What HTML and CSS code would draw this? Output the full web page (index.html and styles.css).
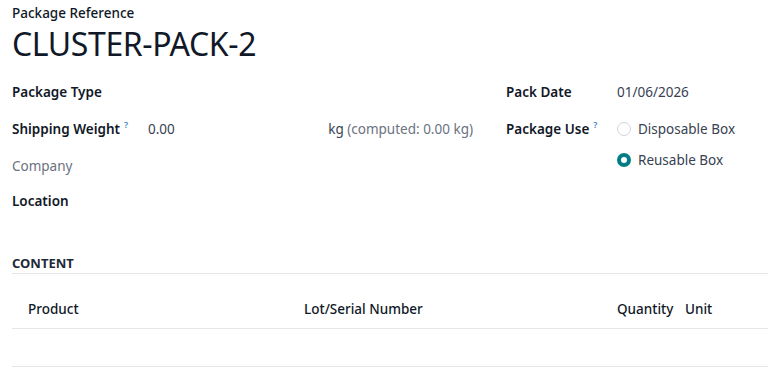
FILE: index.html
```html
<!DOCTYPE html>
<html>
<head>
<meta charset="utf-8">
<link rel="stylesheet" href="styles.css">
</head>
<body>
<div class="sheet">
  <div class="ref-label">Package Reference</div>
  <h1 class="title">CLUSTER-PACK-2</h1>

  <div class="groups">
    <div class="group left">
      <div class="row"><div class="label">Package Type</div><div class="value"></div></div>
      <div class="row"><div class="label">Shipping Weight<sup class="help">?</sup></div>
        <div class="value weight"><span>0.00</span><span class="unit">kg <span class="muted">(computed: 0.00 kg)</span></span></div></div>
      <div class="row"><div class="label muted-label">Company</div><div class="value"></div></div>
      <div class="row"><div class="label">Location</div><div class="value"></div></div>
    </div>
    <div class="group right">
      <div class="row"><div class="label">Pack Date</div><div class="value">01/06/2026</div></div>
      <div class="row top"><div class="label">Package Use<sup class="help">?</sup></div>
        <div class="value radios">
          <label class="radio"><span class="dot"></span>Disposable Box</label>
          <label class="radio"><span class="dot checked"></span>Reusable Box</label>
        </div></div>
    </div>
  </div>

  <div class="section">CONTENT</div>
  <table class="lines">
    <thead>
      <tr><th class="c-product">Product</th><th class="c-lot">Lot/Serial Number</th><th class="c-qty">Quantity</th><th class="c-unit">Unit</th></tr>
    </thead>
    <tbody>
      <tr><td></td><td></td><td></td><td></td></tr>
    </tbody>
  </table>
</div>
</body>
</html>
```
FILE: styles.css
```css
* { box-sizing: border-box; }
html, body { margin: 0; padding: 0; background: #fff; }
body {
  font-family: "Noto Sans", "Open Sans", sans-serif;
  font-size: 13.5px;
  color: #1f2937;
  width: 768px;
  overflow: hidden;
}
.sheet { padding: 4px 0 0 12px; }
.ref-label { font-size: 13.5px; font-weight: 500; line-height: 18px; color: #111827; }
.title {
  margin: 3px 0 0;
  font-size: 32px;
  font-weight: 400;
  line-height: 38px;
  color: #111827;
  letter-spacing: -0.4px;
}
.groups { display: flex; margin-top: 19px; }
.group.left { width: 494px; }
.group.right { flex: 1; }
.row { display: flex; align-items: flex-start; min-height: 37px; }
.left .row:nth-child(3) { min-height: 35px; }
.label { font-weight: 600; color: #111827; line-height: 20px; }
.left .label { width: 136px; }
.right .label { width: 111px; }
.muted-label { font-weight: 400; color: #6b7280; }
.value { line-height: 20px; color: #374151; }
.left .value { flex: 1; padding-right: 33px; }
.weight { display: flex; justify-content: space-between; }
.muted { color: #6b7280; }
.help { color: #3b82c4; font-size: 9px; font-weight: 600; margin-left: 4px; vertical-align: 0; position: relative; top: -6px; }
.radios { display: flex; flex-direction: column; gap: 11px; }
.radio { display: flex; align-items: center; gap: 7px; line-height: 20px; color: #374151; }
.dot { width: 14px; height: 14px; border-radius: 50%; border: 1px solid #d1d5db; background: #fff; }
.dot.checked { border: 4px solid #017e84; background: #fff; }
.section {
  margin-top: 25px;
  font-weight: 700;
  font-size: 13px;
  line-height: 20px;
  color: #1f2937;
  border-bottom: 1px solid #e5e7eb;
}
.lines { width: 756px; border-collapse: collapse; table-layout: fixed; margin-top: 13px; }
.lines th { text-align: left; font-weight: 500; color: #111827; height: 41px; padding: 3px 0 0 16px; border-bottom: 1px solid #e5e7eb; }
.lines td { height: 38px; border-bottom: 1px solid #e5e7eb; }
.lines th.c-product { width: 276px; }
.lines th.c-lot { width: 313px; }
.lines th.c-qty { width: 68px; }
.lines th.c-unit { padding-left: 16px; }
```
